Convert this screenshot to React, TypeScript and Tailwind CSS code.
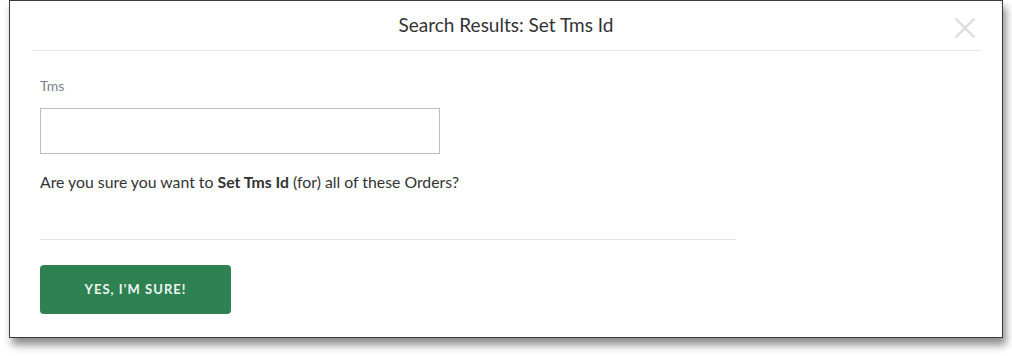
import React from "react";

export default function App() {
  return (
    <div className="w-[1012px] h-[356px] bg-white" style={{ fontFamily: "Lato, 'Open Sans', sans-serif" }}>
      <div className="ml-[9px] w-[994px] h-[338px] bg-white border border-[#3a3a3a] shadow-[3px_7px_8px_rgba(0,0,0,0.45)] flex flex-col">
        <div className="relative mx-[22px] h-[50px] border-b border-[#e5e5e5] flex items-center justify-center">
          <h1 className="text-[19px] text-[#333] leading-none mt-[-3px]">Search Results: Set Tms Id</h1>
          <button className="absolute right-[4px] top-[16px] w-[22px] h-[22px] flex items-center justify-center" aria-label="Close">
            <svg width="22" height="22" viewBox="0 0 22 22">
              <path d="M1.5 1.5 L20.5 20.5 M20.5 1.5 L1.5 20.5" stroke="#dcdcdc" strokeWidth="2.4" fill="none" />
            </svg>
          </button>
        </div>
        <div className="pl-[30px] flex flex-col">
          <label className="mt-[27px] text-[14px] leading-[16px] text-[#808088]">Tms</label>
          <input className="mt-[14px] w-[400px] h-[46px] border border-[#bdbdbd] outline-none px-3" />
          <p className="mt-[18px] text-[15.8px] leading-[20px] text-[#333]">
            Are you sure you want to <b className="font-bold">Set Tms Id</b> (for) all of these Orders?
          </p>
          <div className="mt-[47px] w-[696px] border-t border-[#e5e5e5]" />
          <button className="mt-[25px] w-[191px] h-[49px] rounded-[4px] bg-[#2e8150] text-[#eef4f0] text-[13px] font-bold tracking-[0.08em] uppercase">
            Yes, I'm sure!
          </button>
        </div>
      </div>
    </div>
  );
}
